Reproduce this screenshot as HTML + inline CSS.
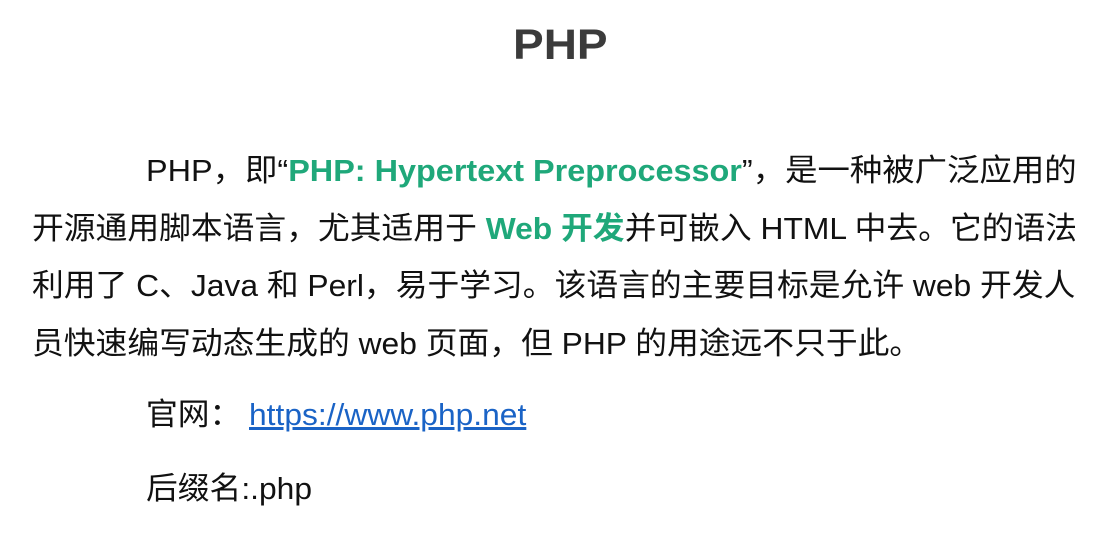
<!DOCTYPE html>
<html><head><meta charset="utf-8"><style>
body{margin:0;width:1118px;height:553px;background:#fff;overflow:hidden;font-family:"Liberation Sans","Noto Sans CJK SC",sans-serif;color:#111;position:relative}
.t{position:absolute;left:513px;top:21px;font-size:43px;font-weight:bold;color:#3b3b3b;transform:scaleX(1.07);transform-origin:left}
.l{position:absolute;font-size:31px;white-space:nowrap;line-height:34px;transform:scaleX(1.025);transform-origin:left}
.g{color:#1fa87a;font-weight:bold}
a{color:#1a63c6;text-decoration:underline}
</style></head><body>
<div class="t">PHP</div>
<div class="l" style="left:146px;top:154px;transform:scaleX(1.045)">PHP，即“<span class="g">PHP: Hypertext Preprocessor</span>”，是一种被广泛应用的</div>
<div class="l" style="left:32px;top:212px">开源通用脚本语言，尤其适用于 <span class="g">Web 开发</span>并可嵌入 HTML 中去。它的语法</div>
<div class="l" style="left:32px;top:269px">利用了 C、Java 和 Perl，易于学习。该语言的主要目标是允许 web 开发人</div>
<div class="l" style="left:32px;top:327px">员快速编写动态生成的 web 页面，但 PHP 的用途远不只于此。</div>
<div class="l" style="left:146px;top:398px">官网：</div>
<div class="l" style="left:249px;top:398px"><a>https://www.php.net</a></div>
<div class="l" style="left:146px;top:472px">后缀名:.php</div>
</body></html>
